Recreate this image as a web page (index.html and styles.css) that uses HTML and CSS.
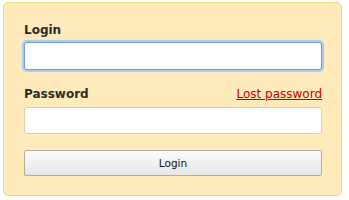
FILE: index.html
```html
<!DOCTYPE html>
<html lang="en">
<head>
  <meta charset="UTF-8">
  <title>Login</title>
  <link rel="stylesheet" href="styles.css">
</head>
<body>

  <form class="login-box">
    <div class="field-head">
      <label for="login">Login</label>
    </div>
    <input class="text-input focused" id="login" name="login" type="text">

    <div class="field-head spaced">
      <label for="password">Password</label>
      <a class="lost-link" href="#">Lost password</a>
    </div>
    <input class="text-input" id="password" name="password" type="password">

    <button class="submit-button" type="button">Login</button>
  </form>

</body>
</html>
```

FILE: styles.css
```css
body {
  margin: 0;
  padding: 2px 7px 3px 3px;
  font-family: "DejaVu Sans", Verdana, sans-serif;
  background-color: #ffffff;
  color: #333333;
}
.login-box {
  background-color: #ffeabb;
  border: 1px solid #f5d77f;
  border-radius: 5px;
  padding: 20px 19px 19px 20px;
  display: flex;
  flex-direction: column;
  height: 194px;
  box-sizing: border-box;
}
.field-head {
  display: flex;
  justify-content: space-between;
  align-items: baseline;
  font-size: 12px;
  line-height: 15px;
  margin-bottom: 4px;
}
.field-head.spaced {
  margin-top: 17px;
  margin-bottom: 5px;
}
.field-head label {
  font-weight: bold;
  color: #2b2b2b;
}
.lost-link {
  color: #c40000;
  text-decoration: underline;
}
.text-input {
  height: 28px;
  box-sizing: border-box;
  border: 1px solid #d8ceb4;
  border-radius: 3px;
  background-color: #ffffff;
  margin: 0;
  padding: 0 6px;
  outline: none;
}
.text-input.focused {
  border-color: #6d9fdc;
  box-shadow: 0 0 1px 2px #a6c8f0;
}
.submit-button {
  margin-top: 16px;
  height: 26px;
  border: 1px solid #b6ad9d;
  border-radius: 2px;
  background: linear-gradient(#fcfcfc, #e5e5e5);
  font-family: "DejaVu Sans", Verdana, sans-serif;
  font-size: 10.5px;
  color: #111111;
  cursor: pointer;
}
```
